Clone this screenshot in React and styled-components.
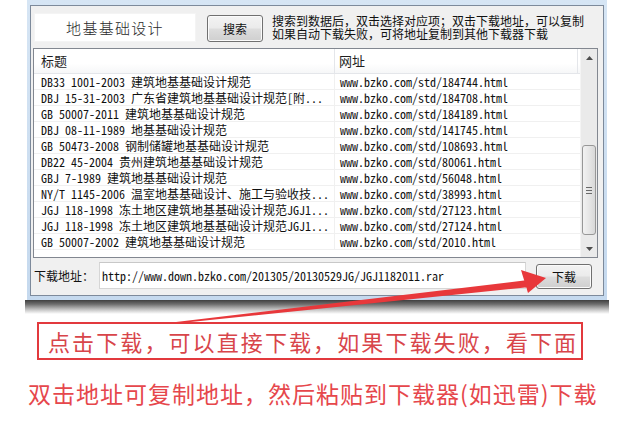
import React from "react";
import styled, { createGlobalStyle } from "styled-components";

const GlobalStyle = createGlobalStyle`
  * {
    margin: 0;
    padding: 0;
    box-sizing: border-box;
  }

  body {
    font-family: "Noto Sans CJK SC", "Liberation Sans", sans-serif;
    background: #ffffff;
    width: 627px;
    height: 424px;
    overflow: hidden;
  }
`;

const Page = styled.div`
  position: relative;
  width: 627px;
  height: 424px;
  background: #ffffff;
`;

const WindowFrame = styled.div`
  margin-left: 27px;
  width: 580px;
  padding: 5px 3px 4px 3px;
  background: linear-gradient(180deg, #d6e5f4 0%, #c5d9ee 100%);
`;

const Dialog = styled.div`
  border: 1px solid #7d8a9b;
  background: #f0f0f0;
  height: 291px;
  display: flex;
  flex-direction: column;
`;

const TopRow = styled.div`
  height: 42px;
  display: flex;
  align-items: flex-start;
  padding-left: 3px;
`;

const SearchInput = styled.input`
  margin-top: 7px;
  width: 162px;
  height: 29px;
  border: 1px solid #f4f4f4;
  background: #ffffff;
  outline: none;
  text-align: center;
  font-family: "Noto Sans CJK SC", sans-serif;
  font-size: 15px;
  font-weight: 300;
  letter-spacing: 1.3px;
  color: #2a2a2a;
`;

const Button = styled.button`
  margin-top: ${(p) => p.$top || 0}px;
  margin-left: ${(p) => p.$left || 0}px;
  width: 56px;
  height: ${(p) => p.$height || 27}px;
  border: 1px solid #707070;
  border-radius: 3px;
  background: linear-gradient(180deg, #f3f3f3 0%, #ebebeb 48%, #dddddd 52%, #cfcfcf 100%);
  box-shadow: inset 0 0 0 1px #fbfbfb;
  font-family: "Noto Sans CJK SC", sans-serif;
  font-size: 12px;
  color: #111111;
  display: flex;
  align-items: center;
  justify-content: center;
  flex-shrink: 0;
`;

const HelpText = styled.div`
  margin-top: 8px;
  margin-left: 9px;
  display: flex;
  flex-direction: column;
`;

const HelpLine = styled.div`
  font-size: 12px;
  line-height: 13px;
  height: 13px;
  color: #111111;
  white-space: nowrap;
`;

const ListView = styled.div`
  margin-left: 2px;
  width: 565px;
  height: 210px;
  border: 1px solid #828790;
  background: #ffffff;
  display: flex;
`;

const ListBody = styled.div`
  width: 546px;
  display: flex;
  flex-direction: column;
`;

const HeaderRow = styled.div`
  height: 25px;
  display: flex;
  background: linear-gradient(180deg, #ffffff 0%, #ffffff 60%, #f6f7f8 100%);
  border-bottom: 1px solid #e4e6ea;
`;

const HeaderCell = styled.div`
  width: ${(p) => p.$w}px;
  padding-left: ${(p) => p.$pad}px;
  border-right: 1px solid #e4e6ea;
  font-size: 13px;
  line-height: 24px;
  color: #1e1e1e;
`;

const Row = styled.div`
  height: 16px;
  display: flex;
  border-bottom: 1px solid #f0f0f0;
`;

const Cell = styled.div`
  width: ${(p) => p.$w}px;
  padding-left: ${(p) => p.$pad}px;
  border-right: ${(p) => (p.$divider ? "1px solid #f0f0f0" : "none")};
  font-family: "Noto Sans Mono CJK SC", "Liberation Mono", monospace;
  font-size: 12px;
  line-height: 15px;
  color: #111111;
  white-space: nowrap;
  overflow: hidden;
`;

const ScrollBar = styled.div`
  width: 17px;
  background: #eaeaea;
  border-left: 1px solid #f4f4f4;
  display: flex;
  flex-direction: column;
  align-items: center;
`;

const ArrowBtn = styled.div`
  width: 17px;
  height: 17px;
  display: flex;
  align-items: center;
  justify-content: center;
`;

const Thumb = styled.div`
  margin-top: 79px;
  width: 14px;
  height: 90px;
  border: 1px solid #979797;
  border-radius: 3px;
  background: linear-gradient(90deg, #f2f2f2 0%, #e6e6e6 50%, #d8d8d8 100%);
  display: flex;
  flex-direction: column;
  align-items: center;
  justify-content: center;
  gap: 2px;
`;

const Grip = styled.div`
  width: 6px;
  height: 1px;
  background: #6a6a6a;
`;

const Spacer = styled.div`
  flex: 1;
`;

const BottomRow = styled.div`
  flex: 1;
  display: flex;
  align-items: flex-start;
  padding-left: 3px;
`;

const Label = styled.div`
  margin-top: 10px;
  width: 65px;
  font-size: 12px;
  line-height: 16px;
  color: #111111;
`;

const UrlInput = styled.input`
  margin-top: 4px;
  width: 427px;
  height: 27px;
  border: 1px solid #d6d6d6;
  border-top-color: #c8c8c8;
  background: #ffffff;
  outline: none;
  padding-left: 2px;
  font-family: "Noto Sans Mono CJK SC", "Liberation Mono", monospace;
  font-size: 12px;
  color: #111111;
`;

const Shadow = styled.div`
  margin-left: 25px;
  width: 584px;
  height: 14px;
  background: linear-gradient(180deg, #3f3f3f 0%, #6e6e6e 30%, #bdbdbd 65%, #ffffff 100%);
`;

const NoticeBox = styled.div`
  margin-top: 8px;
  margin-left: 37px;
  width: 546px;
  height: 38px;
  border: 2px solid #e2393d;
  display: flex;
  align-items: center;
  padding-left: 9px;
  font-size: 22px;
  letter-spacing: 2.1px;
  color: #d8454a;
  white-space: nowrap;
`;

const Footer = styled.div`
  margin-top: 19px;
  margin-left: 28px;
  font-size: 23px;
  line-height: 28px;
  letter-spacing: 1px;
  color: #e6474c;
  white-space: nowrap;
`;

const Overlay = styled.svg`
  position: absolute;
  left: 0;
  top: 0;
  pointer-events: none;
`;

const rows = [
  ["DB33 1001-2003 建筑地基基础设计规范", "www.bzko.com/std/184744.html"],
  ["DBJ 15-31-2003 广东省建筑地基基础设计规范[附...", "www.bzko.com/std/184708.html"],
  ["GB 50007-2011 建筑地基基础设计规范", "www.bzko.com/std/184189.html"],
  ["DBJ 08-11-1989 地基基础设计规范", "www.bzko.com/std/141745.html"],
  ["GB 50473-2008 钢制储罐地基基础设计规范", "www.bzko.com/std/108693.html"],
  ["DB22 45-2004 贵州建筑地基基础设计规范", "www.bzko.com/std/80061.html"],
  ["GBJ 7-1989 建筑地基基础设计规范", "www.bzko.com/std/56048.html"],
  ["NY/T 1145-2006 温室地基基础设计、施工与验收技...", "www.bzko.com/std/38993.html"],
  ["JGJ 118-1998 冻土地区建筑地基基础设计规范JGJ1...", "www.bzko.com/std/27123.html"],
  ["JGJ 118-1998 冻土地区建筑地基基础设计规范JGJ1...", "www.bzko.com/std/27124.html"],
  ["GB 50007-2002 建筑地基基础设计规范", "www.bzko.com/std/2010.html"],
];

const App = () => {
  return (
    <>
      <GlobalStyle />
      <Page>
        <WindowFrame>
          <Dialog>
            <TopRow>
              <SearchInput readOnly value="地基基础设计" />
              <Button $top={9} $left={11}>搜索</Button>
              <HelpText>
                <HelpLine>搜索到数据后，双击选择对应项；双击下载地址，可以复制</HelpLine>
                <HelpLine>如果自动下载失败，可将地址复制到其他下载器下载</HelpLine>
              </HelpText>
            </TopRow>

            <ListView>
              <ListBody>
                <HeaderRow>
                  <HeaderCell $w={301} $pad={7}>标题</HeaderCell>
                  <HeaderCell $w={243} $pad={4}>网址</HeaderCell>
                </HeaderRow>
                {rows.map(([title, url], i) => (
                  <Row key={i}>
                    <Cell $w={301} $pad={7} $divider>{title}</Cell>
                    <Cell $w={243} $pad={5}>{url}</Cell>
                  </Row>
                ))}
              </ListBody>
              <Spacer />
              <ScrollBar>
                <ArrowBtn>
                  <svg width="7" height="4" viewBox="0 0 7 4">
                    <path d="M0 4 L3.5 0 L7 4 Z" fill="#4d4d4d" />
                  </svg>
                </ArrowBtn>
                <Thumb>
                  <Grip />
                  <Grip />
                  <Grip />
                </Thumb>
                <Spacer />
                <ArrowBtn>
                  <svg width="7" height="4" viewBox="0 0 7 4">
                    <path d="M0 0 L3.5 4 L7 0 Z" fill="#4d4d4d" />
                  </svg>
                </ArrowBtn>
              </ScrollBar>
            </ListView>

            <BottomRow>
              <Label>下载地址：</Label>
              <UrlInput
                readOnly
                value="http://www.down.bzko.com/201305/20130529JG/JGJ1182011.rar"
              />
              <Button $top={6} $left={10} $height={25}>下载</Button>
            </BottomRow>
          </Dialog>
        </WindowFrame>

        <Shadow />

        <NoticeBox>点击下载，可以直接下载，如果下载失败，看下面</NoticeBox>

        <Footer>双击地址可复制地址，然后粘贴到下载器(如迅雷)下载</Footer>

        <Overlay width="627" height="424" viewBox="0 0 627 424">
          <polygon points="176,322 528,280 530,287 176,323.5" fill="#e8383b" />
          <polygon points="521,270 546,278 528,293" fill="#e8383b" />
        </Overlay>
      </Page>
    </>
  );
};

export default App;
